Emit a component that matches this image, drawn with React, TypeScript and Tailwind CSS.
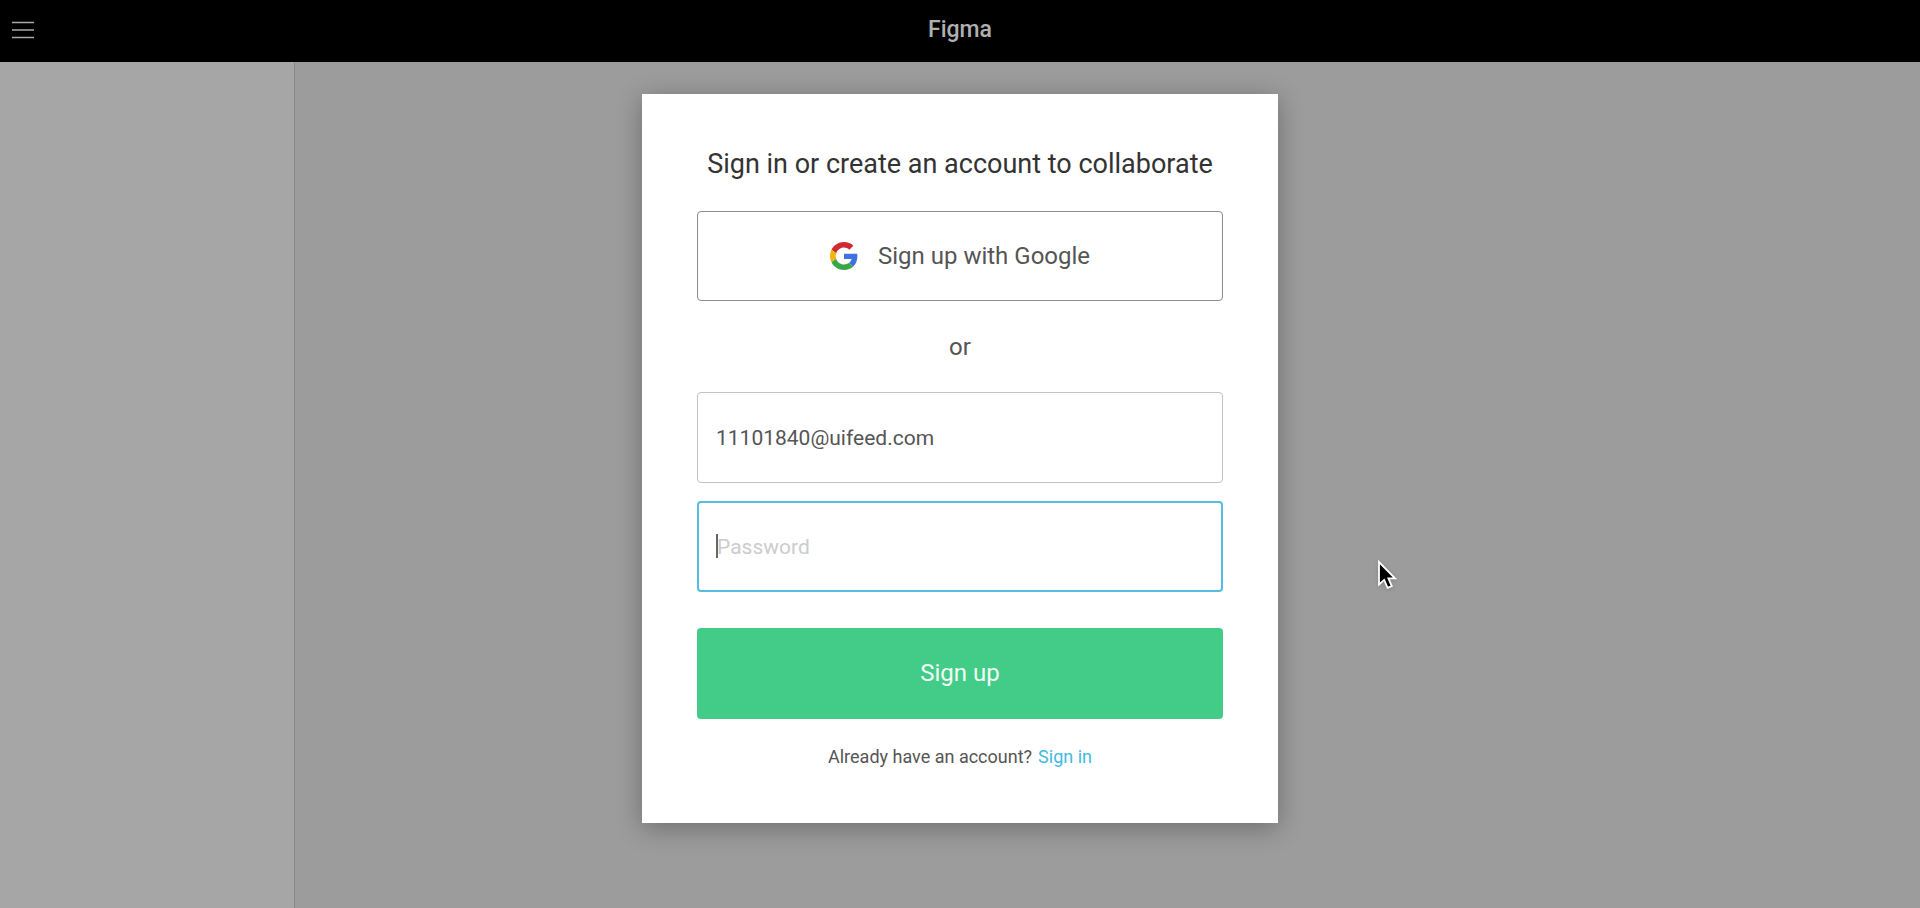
function GoogleLogo() {
  return (
    <svg viewBox="0 0 48 48" className="w-7 h-7" aria-hidden="true">
      <path fill="#cf2931" d="M24 9.5c3.54 0 6.71 1.22 9.21 3.6l6.85-6.85C35.9 2.38 30.47 0 24 0 14.62 0 6.51 5.38 2.56 13.22l7.98 6.19C12.43 13.72 17.74 9.5 24 9.5z" />
      <path fill="#4071e0" d="M46.98 24.55c0-1.57-.15-3.09-.38-4.55H24v9.02h12.94c-.58 2.96-2.26 5.48-4.78 7.18l7.73 6c4.51-4.18 7.09-10.36 7.09-17.65z" />
      <path fill="#f2b50c" d="M10.53 28.59c-.48-1.45-.76-2.99-.76-4.59s.27-3.14.76-4.59l-7.98-6.19C.92 16.46 0 20.12 0 24c0 3.88.92 7.54 2.56 10.78l7.97-6.19z" />
      <path fill="#3aa648" d="M24 48c6.48 0 11.93-2.13 15.89-5.81l-7.73-6c-2.15 1.45-4.92 2.3-8.16 2.3-6.26 0-11.57-4.22-13.47-9.91l-7.98 6.19C6.51 42.62 14.62 48 24 48z" />
    </svg>
  );
}

function MenuIcon() {
  return (
    <svg viewBox="0 0 22 18" className="w-[22px] h-[18px]" stroke="#a8a8a8" strokeWidth="1.7" aria-hidden="true">
      <path d="M0 1.5h22M0 9h22M0 16.5h22" />
    </svg>
  );
}

function Pointer() {
  return (
    <svg viewBox="0 0 18 30" className="absolute left-[1377px] top-[560px] w-[18px] h-[30px] drop-shadow-sm overflow-visible" aria-hidden="true">
      <path d="M2 2v22.5l5.2-4.6 3.4 8 4.2-1.8-3.4-7.8h6.6z" fill="#000" stroke="#fff" strokeWidth="1.8" />
    </svg>
  );
}

export default function App() {
  return (
    <div className="relative min-h-screen flex flex-col bg-[#9c9c9c] font-['Roboto',sans-serif] text-[#555]">
      <header className="h-[62px] grid grid-cols-3 items-center bg-black px-3 pb-0.5">
        <button type="button" aria-label="Menu" className="justify-self-start">
          <MenuIcon />
        </button>
        <h1 className="justify-self-center text-[23px] leading-8 font-medium text-[#b0b0b0]">Figma</h1>
      </header>

      <div className="flex flex-1">
        <aside className="w-[295px] bg-[#a6a6a6] border-r border-[#888]" />
        <main className="flex-1" />
      </div>

      <div className="absolute inset-0 flex items-start justify-center pt-[94px]">
        <div
          role="dialog"
          aria-labelledby="dialog-title"
          className="w-full max-w-[636px] bg-white px-[55px] pt-[52px] pb-[52px] shadow-[0_5px_24px_rgba(0,0,0,0.3)]"
        >
          <h2 id="dialog-title" className="text-center text-[27px] leading-9 text-[#333] whitespace-nowrap">
            Sign in or create an account to collaborate
          </h2>

          <form>
            <button
              type="button"
              className="mt-[29px] w-full h-[90px] flex items-center justify-center gap-5 border border-[#8c8c8c] rounded text-2xl"
            >
              <GoogleLogo />
              Sign up with Google
            </button>

            <p className="h-[91px] flex items-center justify-center text-2xl">or</p>

            <input
              type="email"
              aria-label="Email"
              defaultValue="11101840@uifeed.com"
              className="block w-full h-[91px] px-[18px] border border-[#c4c4c4] rounded text-[21px] outline-none"
            />

            <div className="relative mt-[18px]">
              <input
                type="password"
                aria-label="Password"
                placeholder="Password"
                className="block w-full h-[91px] px-[18px] border-2 border-[#55bde2] rounded text-[21px] placeholder:text-[#ccc] caret-transparent outline-none"
              />
              <span className="absolute left-[19px] top-[33px] w-0.5 h-6 bg-[#666]" />
            </div>

            <button type="submit" className="mt-9 w-full h-[91px] pb-0.5 rounded bg-[#43cc87] text-2xl text-[#f2fcf6]">
              Sign up
            </button>
          </form>

          <p className="mt-6 flex justify-center gap-[6px] text-lg leading-7">
            <span>Already have an account?</span>
            <a href="#signin" className="text-[#3fbbe0]">
              Sign in
            </a>
          </p>
        </div>
      </div>

      <Pointer />
    </div>
  );
}
